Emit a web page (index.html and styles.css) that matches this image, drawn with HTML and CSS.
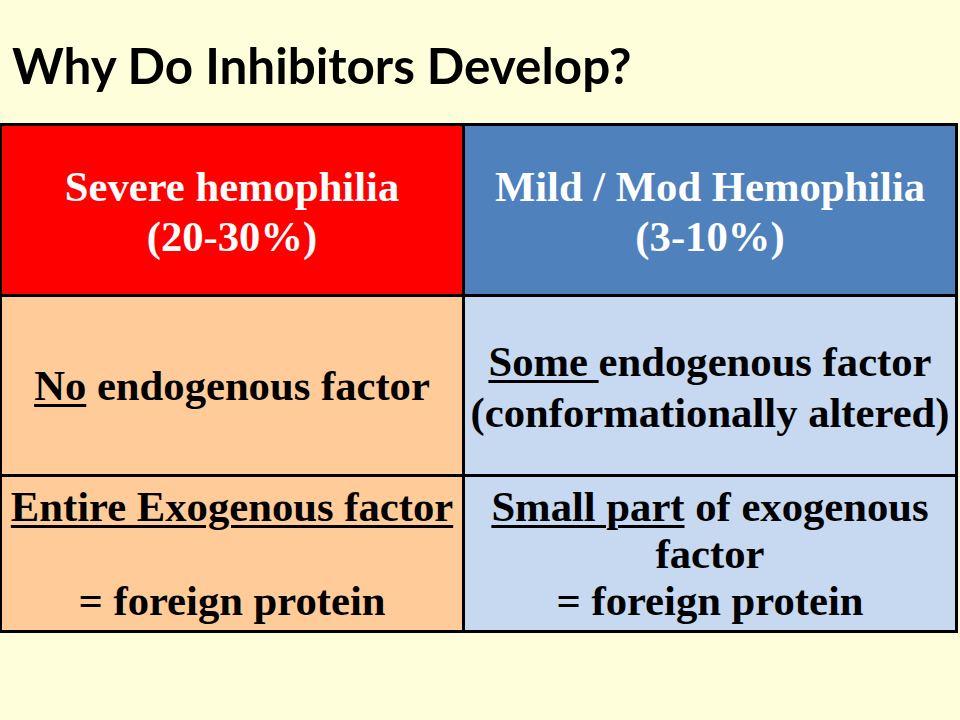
FILE: index.html
```html
<!DOCTYPE html>
<html lang="en">
<head>
<meta charset="utf-8">
<title>Why Do Inhibitors Develop?</title>
<link rel="stylesheet" href="styles.css">
</head>
<body>
<main class="slide">
  <h1 class="title">Why Do Inhibitors Develop?</h1>
  <section class="grid">
    <div class="cell head severe">Severe hemophilia<br>(20-30%)</div>
    <div class="cell head mild">Mild / Mod Hemophilia<br>(3-10%)</div>
    <div class="cell peach"><span><u>No</u> endogenous factor</span></div>
    <div class="cell blue spaced"><span><u>Some </u>endogenous factor<br>(conformationally altered)</span></div>
    <div class="cell peach"><span><u>Entire Exogenous factor</u><br><br>= foreign protein</span></div>
    <div class="cell blue"><span><u>Small part</u> of exogenous factor<br>= foreign protein</span></div>
  </section>
</main>
</body>
</html>
```
FILE: styles.css
```css
html, body {
  margin: 0;
  padding: 0;
}
body {
  background: #fffedb;
  width: 960px;
  height: 720px;
  overflow: hidden;
}
.slide {
  display: flex;
  flex-direction: column;
}
.title {
  margin: 0;
  padding: 36px 0 0 12px;
  height: 87px;
  box-sizing: border-box;
  font-family: "Lato", "Open Sans", sans-serif;
  font-weight: 700;
  font-size: 49.4px;
  line-height: 58px;
  color: #000;
}
.grid {
  margin-left: -1px;
  width: 959px;
  box-sizing: border-box;
  display: grid;
  grid-template-columns: 460px 490px;
  grid-template-rows: 168px 177px 153px;
  gap: 3px;
  padding: 3px;
  background: #000;
  margin-top: 36px;
}
.cell {
  display: flex;
  align-items: center;
  justify-content: center;
  text-align: center;
  font-family: "Liberation Serif", "Times New Roman", serif;
  font-weight: 700;
  font-size: 42.67px;
  line-height: 47px;
  color: #000;
  padding: 0 2px;
  white-space: nowrap;
}
.cell u {
  text-decoration-thickness: 3px;
  text-underline-offset: 4px;
}
.head {
  color: #fff;
  line-height: 50px;
  padding-top: 4px;
}
.spaced {
  line-height: 51px;
  padding-top: 2px;
}
.severe { background: #ff0000; }
.mild { background: #4f81bd; }
.peach { background: #ffcc99; }
.blue { background: #c6d9f1; }
.blue span { white-space: normal; }
```
